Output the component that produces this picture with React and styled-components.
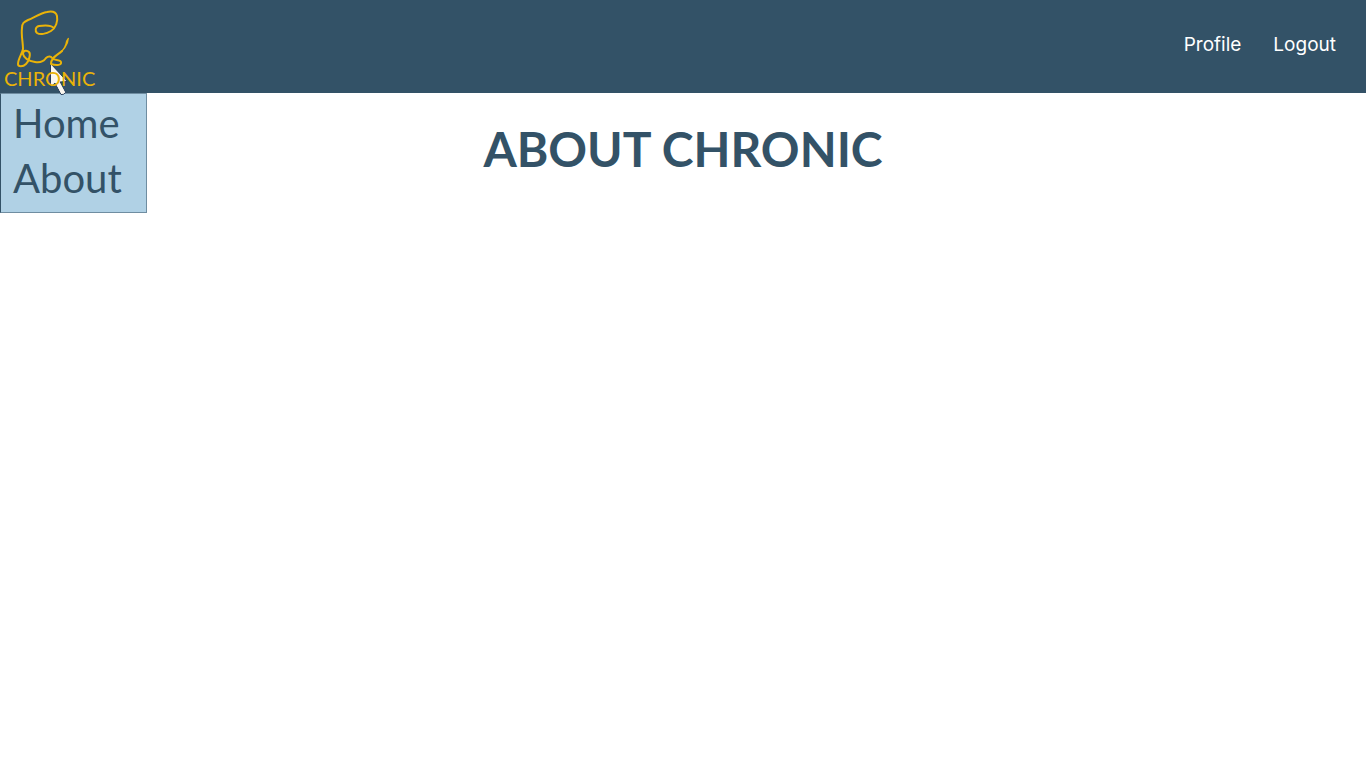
import React from "react";
import styled, { createGlobalStyle } from "styled-components";

const GlobalStyle = createGlobalStyle`
  * { box-sizing: border-box; }
  body {
    margin: 0;
    background: #fff;
    color: #335267;
    font-family: Lato, "Open Sans", sans-serif;
  }
`;

const Page = styled.div`
  min-height: 100vh;
`;

const Header = styled.header`
  position: relative;
  display: flex;
  justify-content: space-between;
  align-items: flex-start;
  height: 93px;
  background: #335267;
`;

const Brand = styled.button`
  position: relative;
  z-index: 2;
  display: block;
  padding: 0;
  border: 0;
  background: none;
  cursor: pointer;
`;

const Logo = styled.svg`
  display: block;
  width: 100px;
  height: 96px;
  overflow: visible;
`;

const Wordmark = styled.text`
  fill: #eab308;
  font-family: Lato, sans-serif;
  font-size: 20px;
`;

const Account = styled.nav`
  display: flex;
  gap: 32px;
  padding: 33px 30px 0 0;
`;

const AccountLink = styled.a`
  color: #fff;
  font-family: Inter, sans-serif;
  font-size: 19px;
  font-weight: 400;
  line-height: 24px;
  text-decoration: none;
`;

const Menu = styled.nav`
  position: absolute;
  z-index: 1;
  top: 100%;
  left: 0;
  display: flex;
  flex-direction: column;
  width: 147px;
  padding: 2px 12px 6px;
  border: 1px solid #6f8da1;
  border-left-color: #335267;
  background: #b0d1e5;
`;

const MenuLink = styled.a`
  color: #335267;
  font-size: 40px;
  line-height: 55px;
  text-decoration: none;
`;

const Main = styled.main`
  padding: 28px 24px;
  text-align: center;
`;

const Title = styled.h1`
  margin: 0;
  font-size: 48px;
  font-weight: 700;
  line-height: 56px;
`;

function ChronicLogo() {
  return (
    <Logo viewBox="0 0 100 96" role="img" aria-label="Chronic">
      <path
        d="M50.5 63.5V87L55 83L61 94.5Q64 95 65.5 92.5L60 82L67 81.5Z"
        fill="#fbf7ef"
        stroke="#263d5b"
        strokeWidth="1"
        strokeLinejoin="round"
      />
      <path d="M51 65V86L55 82L61.5 94L65 92L59 81L66 81Z" fill="#fbf7ef" />
      <g fill="none" stroke="#eab308" strokeWidth="2" strokeLinecap="round" strokeLinejoin="round">
        <path d="M54 28C51 25 45 25 39 26C35 27 35 31 37 33C40 35 46 34 51 31C56 28 58 21 57 16C56 12 52 11 47 12C41 13 35 17 28 20C24 22 22 23 22 28C21 35 23 42 23 49C22 54 18 59 18 64C18 67 23 67 26 64C29 61 31 54 29 52C27 50 23 50 23 54C24 58 29 61 35 62C41 63 44 61 46 58C48 56 51 56 52 58C54 61 60 59 61 62C62 65 57 66 51 64C51 57 58 55 62 51" />
      </g>
      <path d="M61 51Q65 47 66 41Q68 37 69 38L68 43Q66 48 62 52Z" fill="#eab308" />
      <Wordmark x="4" y="86">CHRONIC</Wordmark>
    </Logo>
  );
}

export default function App() {
  return (
    <Page>
      <GlobalStyle />
      <Header>
        <Brand type="button" aria-label="Chronic menu" aria-expanded="true">
          <ChronicLogo />
        </Brand>
        <Account aria-label="Account">
          <AccountLink href="#profile">Profile</AccountLink>
          <AccountLink href="#logout">Logout</AccountLink>
        </Account>
        <Menu aria-label="Main">
          <MenuLink href="#home">Home</MenuLink>
          <MenuLink href="#about">About</MenuLink>
        </Menu>
      </Header>
      <Main>
        <Title>ABOUT CHRONIC</Title>
      </Main>
    </Page>
  );
}
